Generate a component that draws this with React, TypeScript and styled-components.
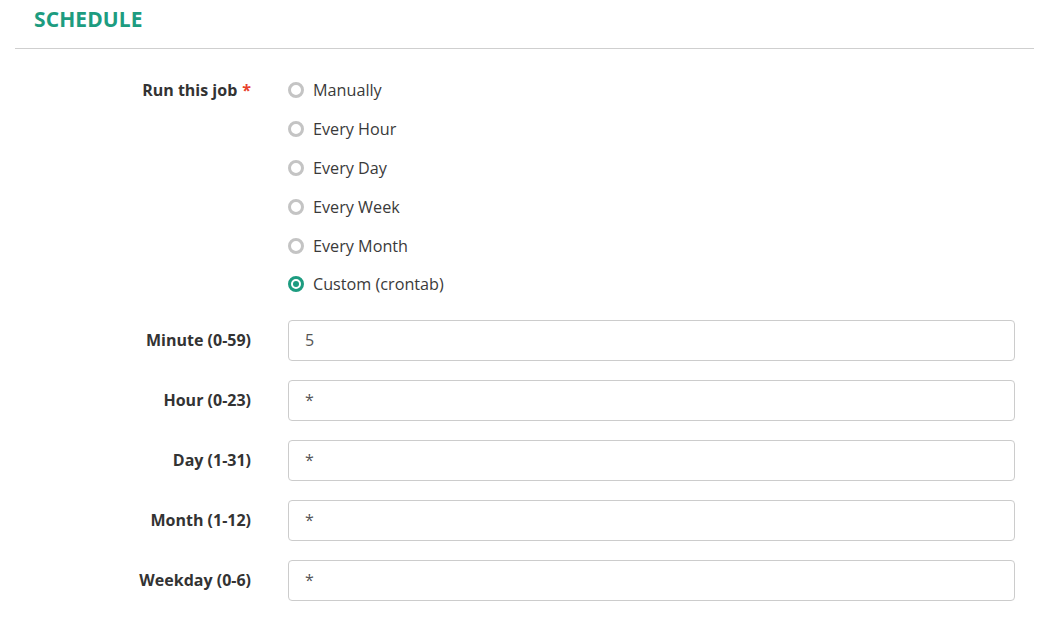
import React, { useState } from 'react'
import styled, { createGlobalStyle } from 'styled-components'

const GlobalStyle = createGlobalStyle`
  html, body {
    margin: 0;
    padding: 0;
    background: #fff;
    font-family: "Open Sans", "Liberation Sans", sans-serif;
  }
`

const Page = styled.div`
  width: 1041px;
  padding-bottom: 20px;
`

const Header = styled.div`
  margin-left: 15px;
  width: 1019px;
  height: 49px;
  box-sizing: border-box;
  padding-left: 19px;
  display: flex;
  align-items: center;
  border-bottom: 1px solid #cfcfcf;
`

const Title = styled.h2`
  margin: 0 0 11px;
  font-size: 21px;
  font-weight: 700;
  color: #1d9c80;
  letter-spacing: 0.1px;
`

const Form = styled.div`
  padding-top: 22px;
  padding-right: 26px;
  display: flex;
  flex-direction: column;
`

const Row = styled.div<{ $gap: number }>`
  display: grid;
  grid-template-columns: 251px 1fr;
  column-gap: 37px;
  margin-bottom: ${p => p.$gap}px;
`

const Label = styled.label<{ $lh: number }>`
  text-align: right;
  font-size: 16px;
  font-weight: 700;
  color: #333;
  line-height: ${p => p.$lh}px;
`

const Required = styled.span`
  color: #e8412c;
  margin-left: 5px;
`

const RadioGroup = styled.div`
  display: flex;
  flex-direction: column;
`

const Option = styled.label`
  height: 38.8px;
  display: flex;
  align-items: center;
  gap: 9px;
  font-size: 16.2px;
  color: #3a3a3a;
  cursor: pointer;
`

const Circle = styled.span<{ $on: boolean }>`
  width: 16px;
  height: 16px;
  box-sizing: border-box;
  border-radius: 50%;
  border: 3px solid ${p => (p.$on ? '#1d9c80' : '#c4c4c4')};
  display: flex;
  align-items: center;
  justify-content: center;
  flex-shrink: 0;
  &::after {
    content: '';
    width: 6px;
    height: 6px;
    border-radius: 50%;
    background: ${p => (p.$on ? '#1d9c80' : 'transparent')};
  }
`

const Input = styled.input`
  height: 41px;
  box-sizing: border-box;
  width: 100%;
  border: 1px solid #cccccc;
  border-radius: 4px;
  padding: 0 16px;
  font-family: "Open Sans", "Liberation Sans", sans-serif;
  font-size: 16px;
  color: #555;
  outline: none;
`

const options = ['Manually', 'Every Hour', 'Every Day', 'Every Week', 'Every Month', 'Custom (crontab)']

const fields = [
  { label: 'Minute (0-59)', value: '5' },
  { label: 'Hour (0-23)', value: '*' },
  { label: 'Day (1-31)', value: '*' },
  { label: 'Month (1-12)', value: '*' },
  { label: 'Weekday (0-6)', value: '*' },
]

export default function App() {
  const [selected, setSelected] = useState('Custom (crontab)')
  const [values, setValues] = useState(fields.map(f => f.value))

  return (
    <Page>
      <GlobalStyle />
      <Header>
        <Title>SCHEDULE</Title>
      </Header>

      <Form>
        <Row $gap={16}>
          <Label $lh={38.8}>
            Run this job<Required>*</Required>
          </Label>
          <RadioGroup>
            {options.map(o => (
              <Option key={o} onClick={() => setSelected(o)}>
                <Circle $on={selected === o} />
                {o}
              </Option>
            ))}
          </RadioGroup>
        </Row>

        {fields.map((f, i) => (
          <Row key={f.label} $gap={19}>
            <Label $lh={41}>{f.label}</Label>
            <Input
              value={values[i]}
              onChange={e => setValues(values.map((v, j) => (j === i ? e.target.value : v)))}
            />
          </Row>
        ))}
      </Form>
    </Page>
  )
}
